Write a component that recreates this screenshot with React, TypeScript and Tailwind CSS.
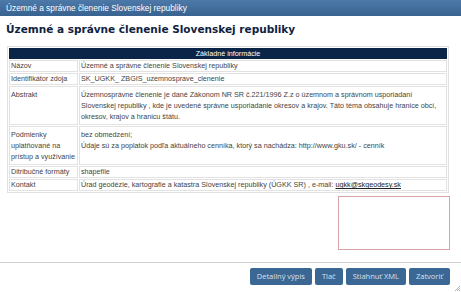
import React from "react";

const rows: { label: React.ReactNode; value: React.ReactNode; multi?: boolean }[] = [
  { label: "Názov", value: "Územné a správne členenie Slovenskej republiky" },
  { label: "Identifikátor zdoja", value: "SK_UGKK_ ZBGIS_uzemnosprave_clenenie" },
  {
    label: "Abstrakt",
    multi: true,
    value: (
      <>
        Územnosprávne členenie je dané Zákonom NR SR č.221/1996 Z.z o územnom a správnom usporiadaní
        <br />
        Slovenskej republiky , kde je uvedené správne usporiadanie okresov a krajov. Táto téma obsahuje hranice obcí,
        <br />
        okresov, krajov a hranicu štátu.
      </>
    ),
  },
  {
    label: (
      <>
        Podmienky
        <br />
        uplatňované na
        <br />
        prístup a využívanie
      </>
    ),
    multi: true,
    value: (
      <>
        bez obmedzení;
        <br />
        Údaje sú za poplatok podľa aktuálneho cenníka, ktorý sa nachádza: http://www.gku.sk/ - cenník
      </>
    ),
  },
  { label: "Ditribučné formáty", value: "shapefile" },
  {
    label: "Kontakt",
    value: (
      <>
        Úrad geodézie, kartografie a katastra Slovenskej republiky (ÚGKK SR) , e-mail:{" "}
        <a href="#" className="underline text-[#222]">ugkk@skgeodesy.sk</a>
      </>
    ),
  },
];

const buttons = ["Detailný výpis", "Tlač", "Stiahnuť XML", "Zatvoriť"];

export default function App() {
  return (
    <div className="relative w-[461px] h-[292px] bg-white overflow-hidden flex flex-col font-['Liberation_Sans',Arial,sans-serif]">
      <div className="h-[16px] shrink-0 flex items-center px-[6px] text-[8.3px] text-white bg-gradient-to-b from-[#4d79a8] to-[#386390]">
        Územné a správne členenie Slovenskej republiky
      </div>

      <div className="flex-1 flex flex-col pl-[7px] pr-[11px]">
        <h1 className="mt-[6px] -ml-[1px] text-[10.5px] leading-[14px] font-bold text-[#0f2240] font-['DejaVu_Sans',Verdana,sans-serif]">
          Územné a správne členenie Slovenskej republiky
        </h1>

        <table className="mt-[10px] w-[442px] border-separate border-spacing-[1px] border border-[#e2e2e2] text-[7.2px] text-[#444]">
          <thead>
            <tr>
              <th colSpan={2} className="bg-[#0b2548] text-white font-normal h-[11px] leading-[10px] text-center">
                Základné informácie
              </th>
            </tr>
          </thead>
          <tbody>
            {rows.map((r, i) => (
              <tr key={i}>
                <td
                  className={
                    r.multi
                      ? "w-[69px] align-top border border-[#e2e2e2] px-[1px] py-[2px] leading-[11px]"
                      : "w-[69px] align-top border border-[#e2e2e2] px-[1px] py-0 leading-[10px]"
                  }
                >
                  {r.label}
                </td>
                <td
                  className={
                    r.multi
                      ? "align-top border border-[#e2e2e2] px-[1px] py-[2px] leading-[11px]"
                      : "align-top border border-[#e2e2e2] px-[1px] py-0 leading-[10px]"
                  }
                >
                  {r.value}
                </td>
              </tr>
            ))}
          </tbody>
        </table>

        <div className="self-end mt-[3px] w-[112px] h-[54px] border border-[#d9a3a3] bg-white" />
      </div>

      <div className="h-[30px] shrink-0 border-t border-[#cfcfcf] flex justify-end items-start gap-[3px] pt-[5px] pr-[11px]">
        {buttons.map((b) => (
          <button
            key={b}
            className="h-[17px] px-[7px] rounded-[2px] bg-[#3b6795] text-[#d6e2ee] text-[7.5px] font-['Open_Sans',sans-serif]"
          >
            {b}
          </button>
        ))}
      </div>

      <svg className="absolute right-[1px] bottom-[1px]" width="6" height="6" viewBox="0 0 6 6">
        <path d="M6 1 L1 6 M6 3 L3 6 M6 5 L5 6" stroke="#9a9a9a" strokeWidth="0.8" />
      </svg>
    </div>
  );
}
